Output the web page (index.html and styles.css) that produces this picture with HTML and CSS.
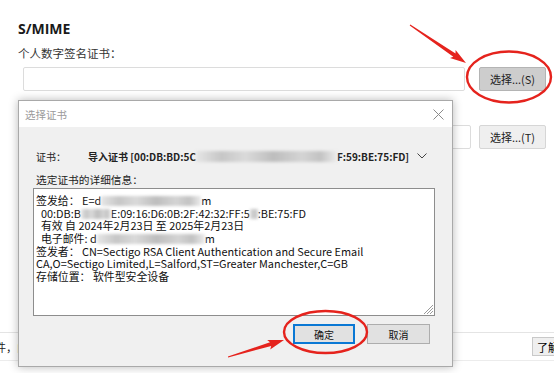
FILE: index.html
```html
<!DOCTYPE html>
<html lang="zh-CN">
<head>
  <meta charset="UTF-8">
  <title>S/MIME - 选择证书</title>
  <link rel="stylesheet" href="styles.css">
</head>
<body>
  <div class="page">
    <h2>S/MIME</h2>
    <div class="label">个人数字签名证书：</div>
    <div class="field-row">
      <div class="field"></div>
      <button class="pick pressed">选择...(S)</button>
    </div>
    <div class="field-row second">
      <div class="field"></div>
      <button class="pick">选择...(T)</button>
    </div>
    <!-- 底部提示条 -->
    <div class="footer">
      <span class="tip">件，由</span>
      <button class="more">了解</button>
    </div>
  </div>

  <!-- 选择证书 对话框 -->
  <div class="dialog">
    <div class="dlg-title">
      <span>选择证书</span>
      <svg class="dlg-close" width="11" height="11" viewBox="0 0 11 11"><path d="M0.5 0.5L10.5 10.5M10.5 0.5L0.5 10.5" stroke="#8a8a8a" stroke-width="1"/></svg>
    </div>
    <div class="dlg-body">
      <div class="cert-row">
        <span class="cert-label">证书：</span>
        <span class="cert-name">导入证书 [00:DB:BD:5C<span class="smear smear-head"></span>F:59:BE:75:FD]</span>
        <svg class="chevron" width="10" height="6" viewBox="0 0 10 6"><path d="M0.5 0.5L5 5L9.5 0.5" fill="none" stroke="#444" stroke-width="1"/></svg>
      </div>
      <div class="detail-label">选定证书的详细信息：</div>
      <div class="details">
        <div class="line">签发给： E=d<span class="smear smear-mail"></span>m</div>
        <div class="line">  00:DB:B<span class="smear smear-short"></span>E:09:16:D6:0B:2F:42:32:FF:5<span class="smear smear-tiny"></span>:BE:75:FD</div>
        <div class="line">  有效 自 2024年2月23日 至 2025年2月23日</div>
        <div class="line">  电子邮件: d<span class="smear smear-mail2"></span>m</div>
        <div class="line">签发者： CN=Sectigo RSA Client Authentication and Secure Email</div>
        <div class="line">CA,O=Sectigo Limited,L=Salford,ST=Greater Manchester,C=GB</div>
        <div class="line">存储位置： 软件型安全设备</div>
        <svg class="grip" width="12" height="12" viewBox="0 0 12 12"><path d="M11 2L2 11M11 5L5 11M11 8L8 11" stroke="#9a9a9a" stroke-width="1"/></svg>
      </div>
      <div class="dlg-actions">
        <button class="dlg-btn focus">确定</button>
        <button class="dlg-btn">取消</button>
      </div>
    </div>
  </div>

  <!-- 红色标注 -->
  <svg class="marks" width="554" height="373" viewBox="0 0 554 373">
    <ellipse cx="509" cy="77" rx="42" ry="25.5" fill="none" stroke="#e5231d" stroke-width="2.4"/>
    <ellipse cx="325.5" cy="332" rx="41.5" ry="21" fill="none" stroke="#e5231d" stroke-width="2.4"/>
    <polygon points="409.7,25.4 453.3,56.8 450,58.1 466,63 455.6,49.9 455.5,53.4 410.3,24.6" fill="#e5231d"/>
    <polygon points="228.1,357.5 271.2,346 270.2,349.5 284,340 267.2,339.9 270,342.2 227.9,356.5" fill="#e5231d"/>
  </svg>
</body>
</html>
```

FILE: styles.css
```css
* {
  box-sizing: border-box;
}
body {
  margin: 0;
  width: 554px;
  height: 373px;
  overflow: hidden;
  position: relative;
  background-color: #fff;
  color: #222;
  font-family: "Noto Sans CJK SC", "Noto Sans", sans-serif;
}
/* --- 背景设置页 --- */
.page {
  padding: 20px 0 0 18px;
}
.page h2 {
  margin: 0;
  font-family: "Open Sans", "Noto Sans CJK SC", sans-serif;
  font-size: 14px;
  font-weight: 700;
  line-height: 18px;
  color: #1a1a1a;
}
.label {
  margin-top: 8px;
  font-size: 11.5px;
  line-height: 15px;
  color: #333;
}
.field-row {
  display: flex;
  align-items: center;
  margin-top: 6px;
  padding-left: 5px;
}
.field-row.second {
  margin-top: 34px;
}
.field {
  width: 442px;
  height: 24px;
  border: 1px solid #dcdcdc;
  border-radius: 2px;
  background-color: #fff;
}
.field-row.second .field {
  width: 448px;
}
.pick {
  margin-left: auto;
  margin-right: 8px;
  width: 67px;
  height: 24px;
  padding: 0;
  border: 1px solid #d6d6d6;
  border-radius: 2px;
  background-color: #efefef;
  font-family: inherit;
  font-size: 11px;
  color: #222;
}
.pick.pressed {
  background-color: #cdcdcd;
  border-color: #b4b4b4;
}
.footer {
  display: flex;
  align-items: center;
  margin: 183px 0 0 -18px;
  height: 29px;
  border-top: 1px solid #e4e4e4;
  border-bottom: 1px solid #ececec;
}
.tip {
  margin-left: -5px;
  font-size: 11px;
}
.more {
  margin-left: auto;
  margin-right: -12px;
  width: 34px;
  height: 19px;
  padding: 0 0 0 4px;
  text-align: left;
  border: 1px solid #c9c9c9;
  background-color: #efefef;
  font-family: inherit;
  font-size: 11px;
}
/* --- 对话框 --- */
.dialog {
  position: absolute;
  left: 18px;
  top: 100px;
  width: 435px;
  height: 267px;
  border: 1px solid #a9a9a9;
  background-color: #f0f0f0;
  box-shadow: 0 0 9px rgba(0,0,0,0.28);
  font-size: 10px;
}
.dlg-title {
  display: flex;
  align-items: center;
  height: 26px;
  padding: 0 8px 0 6px;
  background-color: #fff;
  color: #9a9a9a;
  font-size: 10.5px;
}
.dlg-close {
  margin-left: auto;
}
.dlg-body {
  padding: 0 17px 0 14px;
}
.cert-row {
  display: flex;
  align-items: center;
  height: 16px;
  margin-top: 21px;
  padding-left: 3px;
}
.cert-label {
  width: 52px;
}
.cert-name {
  font-weight: 700;
  white-space: pre;
}
.chevron {
  margin-left: 8px;
}
.detail-label {
  margin-top: 9px;
  padding-left: 3px;
  font-size: 10.7px;
  line-height: 14px;
}
.details {
  position: relative;
  height: 128px;
  margin-top: 1px;
  padding: 5px 2px 0;
  border: 1px solid #8d8d8d;
  background-color: #fff;
  color: #111;
  font-size: 10.9px;
}
.line {
  height: 12.7px;
  line-height: 12.7px;
  white-space: pre;
}
.smear {
  display: inline-block;
  height: 10px;
  vertical-align: -1px;
  background: linear-gradient(90deg, #e6e6e6, #c6c6c6 18%, #dadada 35%, #bdbdbd 55%, #d4d4d4 75%, #c2c2c2 88%, #ececec);
  filter: blur(1.4px);
}
.smear-head {
  width: 141px;
  height: 11px;
}
.smear-mail {
  width: 100px;
}
.smear-mail2 {
  width: 108px;
}
.smear-short {
  width: 30px;
}
.smear-tiny {
  width: 8px;
}
.grip {
  position: absolute;
  right: 0;
  bottom: 0;
}
.dlg-actions {
  display: flex;
  justify-content: flex-end;
  gap: 12px;
  margin-top: 8px;
  padding-right: 5px;
}
.dlg-btn {
  width: 63px;
  height: 20px;
  padding: 0;
  border: 1px solid #adadad;
  background-color: #e1e1e1;
  font-family: inherit;
  font-size: 10px;
  color: #111;
}
.dlg-btn.focus {
  width: 62px;
  border: 2px solid #0a78d4;
}
/* --- 红色标注 --- */
.marks {
  position: absolute;
  left: 0;
  top: 0;
}
```
